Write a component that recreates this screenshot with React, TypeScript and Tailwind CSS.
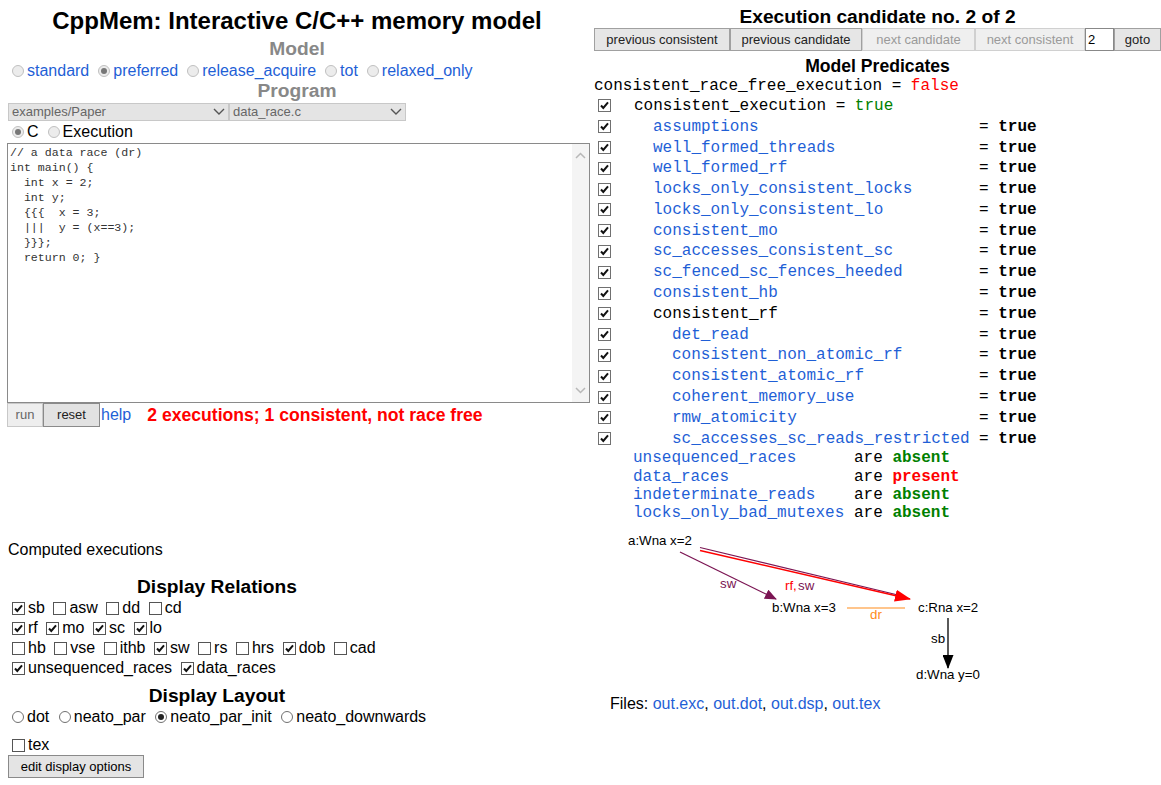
import React from "react";

const blue = "text-[#1f5fd6]";

const Check = ({ on, dark }: { on: boolean; dark?: boolean }) => (
  <span
    className={`inline-flex items-center justify-center w-[13px] h-[13px] shrink-0 bg-white border ${
      dark ? "border-[#707070]" : "border-[#555]"
    }`}
  >
    {on && (
      <svg width="11" height="11" viewBox="0 0 11 11">
        <path d="M2 5.5 L4.3 8 L9 2.3" fill="none" stroke="#111" strokeWidth="2" />
      </svg>
    )}
  </span>
);

const Radio = ({ on, soft }: { on: boolean; soft?: boolean }) => (
  <span
    className={`inline-flex items-center justify-center w-[12px] h-[12px] shrink-0 rounded-full border ${
      soft ? "border-[#c0c0c0] bg-[#ececec]" : "border-[#707070] bg-white"
    }`}
  >
    {on && <span className={`w-[6px] h-[6px] rounded-full ${soft ? "bg-[#777]" : "bg-[#222]"}`} />}
  </span>
);

const Chevron = () => (
  <svg width="12" height="8" viewBox="0 0 12 8">
    <path d="M1 1 L6 6 L11 1" fill="none" stroke="#555" strokeWidth="1.4" />
  </svg>
);

const code = `// a data race (dr)
int main() {
  int x = 2;
  int y;
  {{{  x = 3;
  |||  y = (x==3);
  }}};
  return 0; }`;

const relations: [string, boolean][][] = [
  [["sb", true], ["asw", false], ["dd", false], ["cd", false]],
  [["rf", true], ["mo", true], ["sc", true], ["lo", true]],
  [["hb", false], ["vse", false], ["ithb", false], ["sw", true], ["rs", false], ["hrs", false], ["dob", true], ["cad", false]],
  [["unsequenced_races", true], ["data_races", true]],
];

const preds: [string, number, boolean][] = [
  ["assumptions", 1, true],
  ["well_formed_threads", 1, true],
  ["well_formed_rf", 1, true],
  ["locks_only_consistent_locks", 1, true],
  ["locks_only_consistent_lo", 1, true],
  ["consistent_mo", 1, true],
  ["sc_accesses_consistent_sc", 1, true],
  ["sc_fenced_sc_fences_heeded", 1, true],
  ["consistent_hb", 1, true],
  ["consistent_rf", 1, false],
  ["det_read", 2, true],
  ["consistent_non_atomic_rf", 2, true],
  ["consistent_atomic_rf", 2, true],
  ["coherent_memory_use", 2, true],
  ["rmw_atomicity", 2, true],
  ["sc_accesses_sc_reads_restricted", 2, true],
];

const races: [string, boolean][] = [
  ["unsequenced_races", false],
  ["data_races", true],
  ["indeterminate_reads", false],
  ["locks_only_bad_mutexes", false],
];

const NavBtn = ({ label, w, off }: { label: string; w: string; off?: boolean }) => (
  <div
    className={`${w} h-[23px] flex items-center justify-center text-[13px] border ${
      off ? "bg-[#efefef] border-[#d0d0d0] text-[#9a9a9a]" : "bg-[#e6e6e6] border-[#a0a0a0] text-[#222]"
    }`}
  >
    {label}
  </div>
);

const Graph = () => (
  <svg width="567" height="165" className="block mt-[4px]" style={{ fontFamily: "'Liberation Sans', Arial, sans-serif" }}>
    <defs>
      <marker id="hp" markerWidth="12" markerHeight="10" refX="11" refY="5" orient="auto" markerUnits="userSpaceOnUse">
        <path d="M0 0 L12 5 L0 10 Z" fill="#7b1553" />
      </marker>
      <marker id="hr" markerWidth="16" markerHeight="12" refX="15" refY="6" orient="auto" markerUnits="userSpaceOnUse">
        <path d="M0 0 L16 6 L0 12 Z" fill="#ff0000" />
      </marker>
      <marker id="hk" markerWidth="14" markerHeight="11" refX="13" refY="5.5" orient="auto" markerUnits="userSpaceOnUse">
        <path d="M0 0 L14 5.5 L0 11 Z" fill="#000" />
      </marker>
    </defs>
    <g fontSize="13.3">
      <text x="34" y="19" fill="#000">a:Wna x=2</text>
      <text x="178" y="86" fill="#000">b:Wna x=3</text>
      <text x="324" y="86" fill="#000">c:Rna x=2</text>
      <text x="322" y="153" fill="#000">d:Wna y=0</text>
      <text x="126" y="62" fill="#7b1553">sw</text>
      <text x="191" y="64" fill="#ff0000">rf,</text>
      <text x="204" y="64" fill="#7b1553">sw</text>
      <text x="276" y="93" fill="#ff8c1a">dr</text>
      <text x="337" y="117" fill="#000">sb</text>
    </g>
    <line x1="86" y1="26" x2="182" y2="73" stroke="#7b1553" strokeWidth="1.3" markerEnd="url(#hp)" />
    <line x1="106" y1="21.5" x2="306" y2="69.5" stroke="#7b1553" strokeWidth="1.2" />
    <line x1="106" y1="24.5" x2="316" y2="73" stroke="#ff0000" strokeWidth="1.4" markerEnd="url(#hr)" />
    <line x1="253" y1="82" x2="311" y2="82" stroke="#ff8c1a" strokeWidth="1.2" />
    <line x1="354" y1="92" x2="354" y2="142" stroke="#000" strokeWidth="1.3" markerEnd="url(#hk)" />
  </svg>
);

export default function App() {
  return (
    <div className="w-[1161px] h-[785px] bg-white flex text-[16px] text-black overflow-hidden" style={{ fontFamily: "'Liberation Sans', Arial, sans-serif" }}>
      {/* left column */}
      <div className="w-[594px] shrink-0 flex flex-col">
        <h1 className="h-[39px] flex items-center justify-center text-[24px] font-bold pt-[2px]">
          CppMem: Interactive C/C++ memory model
        </h1>
        <div className="h-[21px] flex items-center justify-center text-[19.2px] font-bold text-[#888]">Model</div>
        <div className={`h-[21px] flex items-center pl-[8px] ${blue}`}>
          {["standard", "preferred", "release_acquire", "tot", "relaxed_only"].map((m) => (
            <span key={m} className="flex items-center ml-[4px] mr-[5px]">
              <Radio on={m === "preferred"} soft />
              <span className="ml-[3px]">{m}</span>
            </span>
          ))}
        </div>
        <div className="h-[21px] flex items-center justify-center text-[19.2px] font-bold text-[#888]">Program</div>
        <div className="mt-[1px] h-[18px] flex pl-[8px]">
          <div className="w-[221px] h-[18px] flex items-center justify-between px-[3px] bg-[#e4e4e4] border border-[#c8c8c8] text-[13px] text-[#666]">
            examples/Paper <Chevron />
          </div>
          <div className="w-[177px] h-[18px] flex items-center justify-between px-[3px] bg-[#e4e4e4] border border-[#c8c8c8] text-[13px] text-[#666]">
            data_race.c <Chevron />
          </div>
        </div>
        <div className="h-[21px] flex items-center pl-[8px]">
          <span className="flex items-center ml-[4px]">
            <Radio on soft />
            <span className="ml-[3px]">C</span>
          </span>
          <span className="flex items-center ml-[9px]">
            <Radio on={false} soft />
            <span className="ml-[3px]">Execution</span>
          </span>
        </div>
        <div className="mt-[1px] ml-[7px] w-[583px] h-[260px] border border-[#8a8a8a] bg-white flex">
          <pre className="flex-1 pl-[2px] pt-[1px] text-[11.6px] leading-[15px] text-[#333]" style={{ fontFamily: "'Liberation Mono', 'Courier New', monospace" }}>
            {code}
          </pre>
          <div className="w-[17px] bg-[#f4f4f4] flex flex-col justify-between items-center py-[8px]">
            <svg width="11" height="7" viewBox="0 0 11 7"><path d="M1 6 L5.5 1.5 L10 6" fill="none" stroke="#b8b8b8" strokeWidth="1.5" /></svg>
            <svg width="11" height="7" viewBox="0 0 11 7"><path d="M1 1 L5.5 5.5 L10 1" fill="none" stroke="#b8b8b8" strokeWidth="1.5" /></svg>
          </div>
        </div>
        <div className="h-[24px] flex items-center pl-[7px]">
          <div className="w-[36px] h-[24px] flex items-center justify-center text-[13px] text-[#666] bg-[#eeeeee] border border-[#c8c8c8]">run</div>
          <div className="w-[57px] h-[24px] flex items-center justify-center text-[13px] text-[#222] bg-[#e2e2e2] border border-[#8a8a8a]">reset</div>
          <span className={`ml-[1px] ${blue}`}>help</span>
          <span className="ml-[16px] text-[17.6px] font-bold text-[#ff0000]">2 executions; 1 consistent, not race free</span>
        </div>
        <div className="mt-[114px] h-[18px] flex items-center pl-[8px]">Computed executions</div>
        <div className="ml-[8px] w-[418px] flex flex-col">
          <div className="mt-[17px] h-[22px] flex items-center justify-center text-[19.2px] font-bold">Display Relations</div>
          {relations.map((row, i) => (
            <div key={i} className="h-[20px] flex items-center">
              {row.map(([n, on]) => (
                <span key={n} className="flex items-center ml-[4px] mr-[4.5px]">
                  <Check on={on} />
                  <span className="ml-[3px]">{n}</span>
                </span>
              ))}
            </div>
          ))}
          <div className="mt-[7px] h-[22px] flex items-center justify-center text-[19.2px] font-bold">Display Layout</div>
          <div className="h-[20px] flex items-center">
            {["dot", "neato_par", "neato_par_init", "neato_downwards"].map((m) => (
              <span key={m} className="flex items-center ml-[4px] mr-[5.5px]">
                <Radio on={m === "neato_par_init"} />
                <span className="ml-[3px]">{m}</span>
              </span>
            ))}
          </div>
          <div className="mt-[8px] h-[20px] flex items-center">
            <span className="flex items-center ml-[4px]">
              <Check on={false} />
              <span className="ml-[3px]">tex</span>
            </span>
          </div>
          <div className="w-[136px] h-[23px] flex items-center justify-center text-[13px] bg-[#e4e4e4] border border-[#8a8a8a]">
            edit display options
          </div>
        </div>
      </div>

      {/* right column */}
      <div className="w-[567px] shrink-0 flex flex-col">
        <div className="h-[28px] pt-[4px] text-center text-[19.2px] leading-[25px] font-bold">Execution candidate no. 2 of 2</div>
        <div className="h-[23px] flex">
          <NavBtn label="previous consistent" w="w-[136px]" />
          <NavBtn label="previous candidate" w="w-[132px]" />
          <NavBtn label="next candidate" w="w-[113px]" off />
          <NavBtn label="next consistent" w="w-[110px]" off />
          <div className="w-[29px] h-[23px] border border-[#888] bg-white text-[13px] flex items-center pl-[2px]">2</div>
          <NavBtn label="goto" w="w-[47px]" />
        </div>
        <div className="mt-[5px] h-[20px] flex items-center justify-center text-[17.6px] font-bold">Model Predicates</div>
        <div style={{ fontFamily: "'Liberation Mono', 'Courier New', monospace" }}>
          <div className="h-[19.5px] flex items-center whitespace-pre">
            consistent_race_free_execution = <span className="text-[#ff0000]">false</span>
          </div>
          <div className="h-[20.8px] flex items-center pl-[4px] whitespace-pre">
            <Check on dark />
            <span className="ml-[23px]">
              consistent_execution = <span className="text-[#008000]">true</span>
            </span>
          </div>
          {preds.map(([n, lvl, isBlue]) => (
            <div key={n} className="h-[20.8px] flex items-center pl-[4px] whitespace-pre">
              <Check on dark />
              <span className={`w-[368px] ${lvl === 1 ? "pl-[42px]" : "pl-[61px]"} ${isBlue ? blue : ""}`}>{n}</span>
              <span>
                = <span className="font-bold">true</span>
              </span>
            </div>
          ))}
          {races.map(([n, bad]) => (
            <div key={n} className="h-[18.3px] flex items-center pl-[39px] whitespace-pre">
              <span className={`w-[221px] ${blue}`}>{n}</span>
              <span>
                are <span className={`font-bold ${bad ? "text-[#ff0000]" : "text-[#008000]"}`}>{bad ? "present" : "absent"}</span>
              </span>
            </div>
          ))}
        </div>
        <Graph />
        <div className="mt-[3px] h-[20px] flex items-center pl-[16px]">
          Files:&nbsp;<span className={blue}>out.exc</span>,&nbsp;<span className={blue}>out.dot</span>,&nbsp;
          <span className={blue}>out.dsp</span>,&nbsp;<span className={blue}>out.tex</span>
        </div>
      </div>
    </div>
  );
}
